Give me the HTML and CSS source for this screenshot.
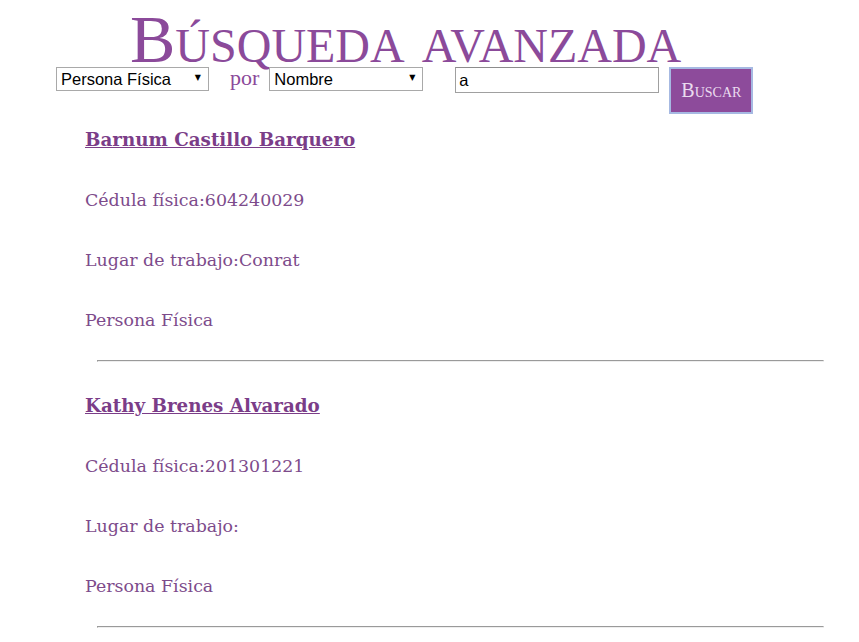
FILE: index.html
```html
<!DOCTYPE html>
<html lang="es">
<head>
<meta charset="utf-8">
<title>Búsqueda avanzada</title>
<link rel="stylesheet" href="styles.css">
</head>
<body>
<header class="top">
  <h1 class="title">Búsqueda avanzada</h1>
  <form class="search">
    <span class="select-wrap w1">
      <select class="select">
        <option>Persona Física</option>
        <option>Persona Jurídica</option>
      </select>
    </span>
    <span class="por">por</span>
    <span class="select-wrap w2">
      <select class="select">
        <option>Nombre</option>
        <option>Cédula</option>
      </select>
    </span>
    <input class="query" type="text" value="a">
    <button class="btn" type="button">Buscar</button>
  </form>
</header>
<main class="results">
  <section class="result">
    <p class="line"><a class="name" href="#">Barnum Castillo Barquero</a></p>
    <p class="line">Cédula física:604240029</p>
    <p class="line">Lugar de trabajo:Conrat</p>
    <p class="line">Persona Física</p>
  </section>
  <hr class="sep">
  <section class="result">
    <p class="line"><a class="name" href="#">Kathy Brenes Alvarado</a></p>
    <p class="line">Cédula física:201301221</p>
    <p class="line">Lugar de trabajo:</p>
    <p class="line">Persona Física</p>
  </section>
  <hr class="sep">
</main>
</body>
</html>
```
FILE: styles.css
```css
html, body {
  margin: 0;
  padding: 0;
  background: #ffffff;
}

body {
  font-family: "DejaVu Serif", Georgia, serif;
  color: #7d4b8b;
}

.top {
  display: flex;
  flex-direction: column;
}

.title {
  margin: 11px 0 0 0;
  padding-left: 130px;
  height: 56px;
  line-height: 56px;
  font-family: "Liberation Serif", "Times New Roman", serif;
  font-weight: normal;
  font-variant: small-caps;
  font-size: 68px;
  color: #8b4a9a;
  white-space: nowrap;
}

.search {
  display: flex;
  align-items: flex-start;
  margin: 0;
  padding-left: 56px;
}

.select-wrap {
  position: relative;
  display: block;
}

.select-wrap::after {
  content: "\25BC";
  position: absolute;
  right: 8px;
  top: 6px;
  font-family: "DejaVu Sans", sans-serif;
  font-size: 8px;
  color: #000;
  pointer-events: none;
}

.w1 { width: 153px; }
.w2 { width: 154px; margin-left: 10px; }

.select {
  appearance: none;
  -webkit-appearance: none;
  display: block;
  width: 100%;
  height: 24px;
  margin: 0;
  padding: 0 0 0 4px;
  border: 1px solid #a9a9a9;
  border-radius: 0;
  background: #ffffff;
  font-family: "Liberation Sans", Arial, sans-serif;
  font-size: 16.5px;
  color: #000;
}

.por {
  margin-left: 21px;
  font-family: "Liberation Serif", "Times New Roman", serif;
  font-size: 22px;
  line-height: 22px;
  color: #8b4a9a;
}

.query {
  margin: 0 0 0 32px;
  width: 204px;
  height: 26px;
  box-sizing: border-box;
  padding: 0 3px;
  border: 1px solid #a0a0a0;
  border-top-color: #8c8c8c;
  font-family: "Liberation Sans", Arial, sans-serif;
  font-size: 16.5px;
  color: #000;
}

.btn {
  margin-left: 10px;
  width: 84px;
  height: 47px;
  box-sizing: border-box;
  border: 2px solid #a6b9e2;
  background: #8d4b9b;
  color: #eadcef;
  font-family: "Liberation Serif", "Times New Roman", serif;
  font-variant: small-caps;
  font-size: 20px;
  padding: 0;
}

.results {
  display: flex;
  flex-direction: column;
  padding-left: 85px;
  margin-top: 14px;
}

.result {
  display: flex;
  flex-direction: column;
  gap: 36px;
}

.line {
  margin: 0;
  font-size: 17.4px;
  line-height: 24px;
  white-space: nowrap;
}

.name {
  font-size: 18.3px;
  font-weight: bold;
  color: #7b3d88;
  text-decoration: underline;
}

.sep {
  margin: 28px 35px 32px 12px;
  border-style: solid;
  border-width: 1px;
  border-color: #9a9a9a #eeeeee #eeeeee #9a9a9a;
  height: 0;
}
```
